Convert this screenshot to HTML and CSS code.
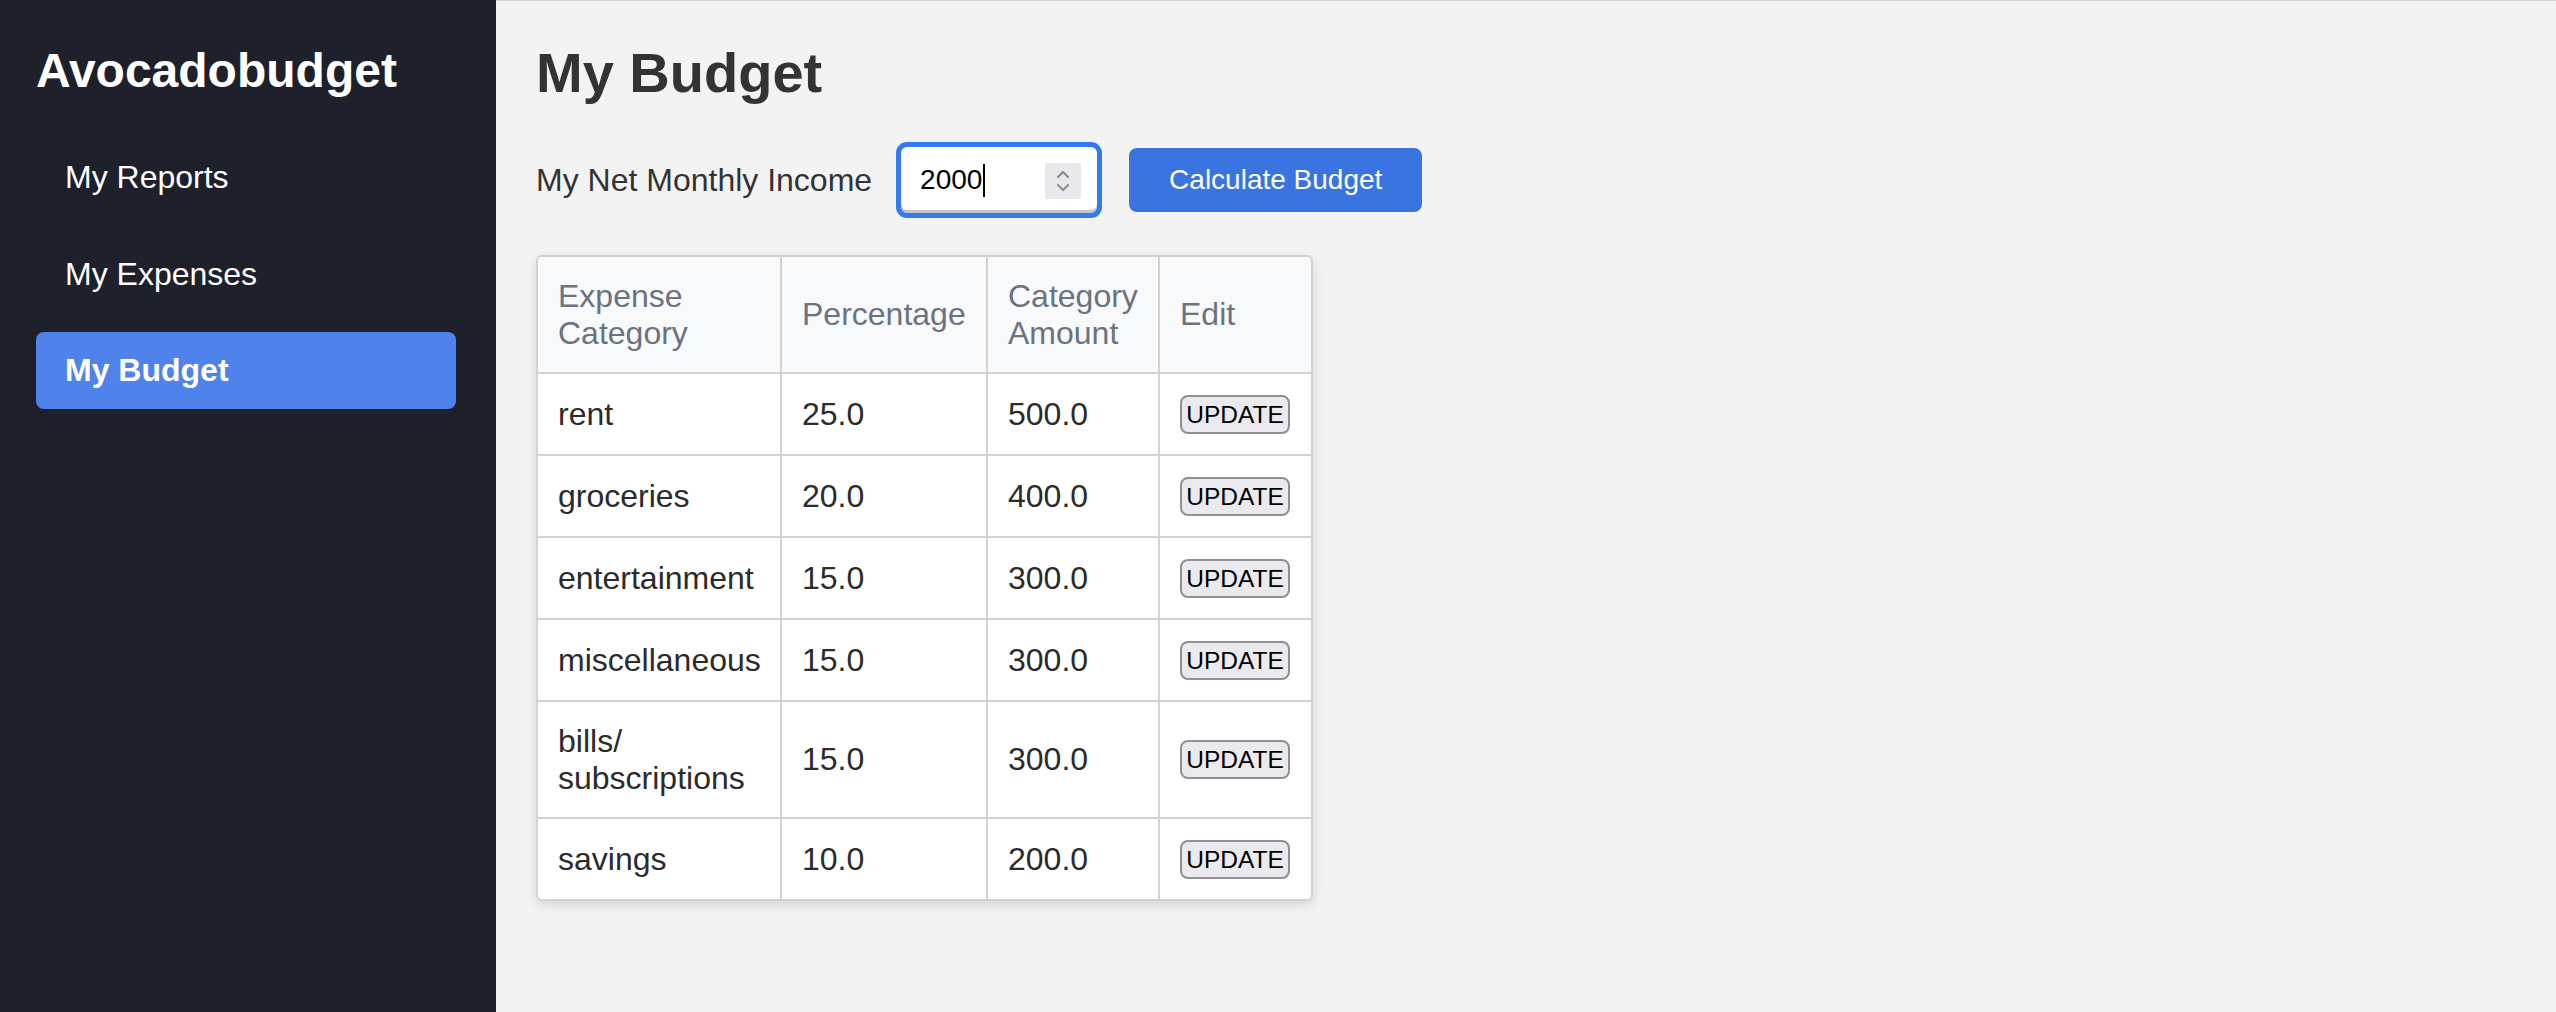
FILE: index.html
```html
<!DOCTYPE html>
<html lang="en">
<head>
<meta charset="utf-8">
<title>Avocadobudget – My Budget</title>
<link rel="stylesheet" href="styles.css">
</head>
<body>
<div class="app">
  <aside class="sidebar">
    <div class="brand">Avocadobudget</div>
    <nav class="nav">
      <a class="nav-item" href="#">My Reports</a>
      <a class="nav-item" href="#">My Expenses</a>
      <a class="nav-item active" href="#">My Budget</a>
    </nav>
  </aside>
  <main class="main">
    <h1 class="page-title">My Budget</h1>
    <div class="income-row">
      <span class="income-label">My Net Monthly Income</span>
      <div class="income-field">
        <span class="income-value">2000</span><span class="caret"></span>
        <span class="spinner">
          <svg viewBox="0 0 36 36" width="36" height="36">
            <path d="M13 14 L18 9 L23 14" fill="none" stroke="#8d8d92" stroke-width="2.2" stroke-linecap="round" stroke-linejoin="round"/>
            <path d="M13 22 L18 27 L23 22" fill="none" stroke="#8d8d92" stroke-width="2.2" stroke-linecap="round" stroke-linejoin="round"/>
          </svg>
        </span>
      </div>
      <button class="calc-btn">Calculate Budget</button>
    </div>
    <div class="table-card">
      <table class="budget-table">
        <colgroup>
          <col class="c1"><col class="c2"><col class="c3"><col class="c4">
        </colgroup>
        <thead>
          <tr><th>Expense Category</th><th>Percentage</th><th>Category Amount</th><th>Edit</th></tr>
        </thead>
        <tbody>
          <tr><td>rent</td><td>25.0</td><td>500.0</td><td><button class="upd">UPDATE</button></td></tr>
          <tr><td>groceries</td><td>20.0</td><td>400.0</td><td><button class="upd">UPDATE</button></td></tr>
          <tr><td>entertainment</td><td>15.0</td><td>300.0</td><td><button class="upd">UPDATE</button></td></tr>
          <tr><td>miscellaneous</td><td>15.0</td><td>300.0</td><td><button class="upd">UPDATE</button></td></tr>
          <tr><td>bills/<wbr>subscriptions</td><td>15.0</td><td>300.0</td><td><button class="upd">UPDATE</button></td></tr>
          <tr><td>savings</td><td>10.0</td><td>200.0</td><td><button class="upd">UPDATE</button></td></tr>
        </tbody>
      </table>
    </div>
  </main>
</div>
</body>
</html>
```

FILE: styles.css
```css
* { box-sizing: border-box; }
html, body {
  margin: 0;
  height: 100%;
}
body {
  font-family: "Liberation Sans", Arial, Helvetica, sans-serif;
  background: #f3f3f3;
  color: #333;
}
.app {
  display: flex;
  min-height: 1012px;
}
.sidebar {
  width: 496px;
  flex: none;
  background: #1e202b;
  padding: 43px 40px 0 36px;
}
.brand {
  font-size: 48px;
  font-weight: 700;
  color: #fff;
  line-height: 55px;
  margin-bottom: 41px;
}
.nav {
  display: flex;
  flex-direction: column;
  gap: 19.5px;
}
.nav-item {
  display: block;
  color: #fff;
  text-decoration: none;
  font-size: 32px;
  line-height: 37px;
  padding: 20px 29px;
  border-radius: 8px;
}
.nav-item.active {
  background: #4f82ea;
  font-weight: 700;
}
.main {
  flex: 1;
  border-top: 1px solid #d2d2d2;
  padding: 40px 40px;
}
.page-title {
  margin: 0 0 37px;
  font-size: 56px;
  line-height: 64px;
  font-weight: 700;
  color: #333;
}
.income-row {
  display: flex;
  align-items: center;
}
.income-label {
  font-size: 32px;
  line-height: 37px;
  color: #333;
  margin-right: 24px;
}
.income-field {
  position: relative;
  width: 206px;
  height: 76px;
  border: 5px solid #3478f3;
  border-radius: 11px;
  background: #fff;
  box-shadow: inset 0 -3px 0 #c4c4c8;
  display: flex;
  align-items: center;
  padding-left: 19px;
}
.income-value {
  font-size: 28px;
  color: #000;
  line-height: 32px;
}
.caret {
  display: inline-block;
  width: 2px;
  height: 33px;
  background: #000;
  margin-left: 1px;
}
.spinner {
  position: absolute;
  right: 16px;
  top: 16px;
  width: 36px;
  height: 36px;
  background: #e8e8ed;
  border-radius: 2px;
  display: flex;
}
.calc-btn {
  margin-left: 27px;
  height: 64px;
  padding: 0 40px;
  border: none;
  border-radius: 8px;
  background: #3a74e0;
  color: #fff;
  font-family: inherit;
  font-size: 28px;
}
.table-card {
  margin-top: 37px;
  width: 777px;
  background: #fff;
  border: 2px solid #d2d2d2;
  border-radius: 6px;
  overflow: hidden;
  box-shadow: 0 4px 12px rgba(0, 0, 0, 0.12);
}
.budget-table {
  border-collapse: collapse;
  table-layout: fixed;
  width: 773px;
  font-size: 32px;
  line-height: 37px;
}
.c1 { width: 243px; }
.c2 { width: 206px; }
.c3 { width: 172px; }
.c4 { width: 152px; }
.budget-table th,
.budget-table td {
  border: 2px solid #d2d2d2;
  padding: 20.5px 20px;
  text-align: left;
  vertical-align: middle;
}
.budget-table tr:first-child th { border-top: none; }
.budget-table tr:last-child td { border-bottom: none; }
.budget-table th:first-child,
.budget-table td:first-child { border-left: none; }
.budget-table th:last-child,
.budget-table td:last-child { border-right: none; }
.budget-table th {
  background: #f8f9fa;
  color: #6b7280;
  font-weight: 400;
}
.budget-table td {
  color: #2b2b2b;
}
.upd {
  font-family: "Liberation Sans", Arial, sans-serif;
  font-size: 24.5px;
  line-height: 29px;
  color: #000;
  background: #e9e9ee;
  border: 2px solid #8f8f95;
  border-radius: 8px;
  padding: 3px 3px;
  width: 110px;
  height: 39px;
  display: block;
}
```
